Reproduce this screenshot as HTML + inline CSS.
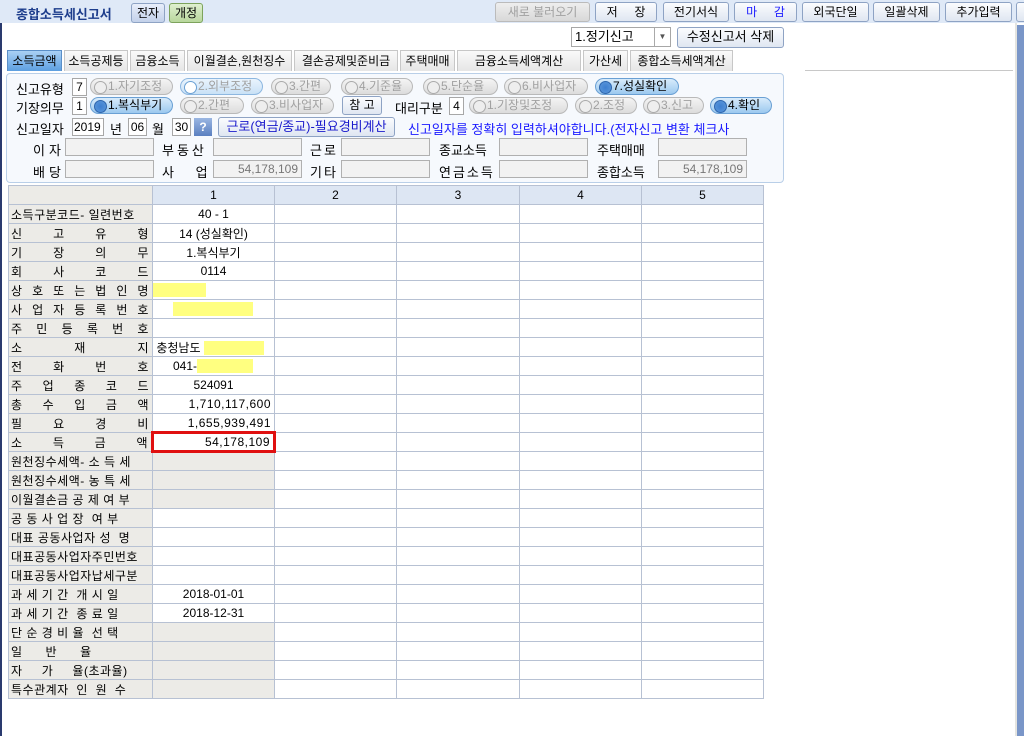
<!DOCTYPE html>
<html><head><meta charset="utf-8">
<style>
*{box-sizing:border-box;margin:0;padding:0}
body{width:1024px;height:736px;background:#fff;position:relative;overflow:hidden;font-family:"Liberation Sans","Noto Sans CJK KR","NanumGothic",sans-serif;font-size:12px;color:#000}
.a{position:absolute;white-space:nowrap}
.btn{position:absolute;height:20px;border:1px solid #8ea3c4;border-radius:3px;background:linear-gradient(#fbfcfe,#dfe6f1);text-align:center;line-height:18px;font-size:12px}
.tab{position:absolute;top:50px;height:21px;border:1px solid #c7c7c7;border-bottom:none;background:linear-gradient(#fafafa,#e6e6e6);text-align:center;line-height:20px;font-size:12px}
.pill{position:absolute;height:17px;border:1px solid #b9b9b9;border-radius:9px;background:linear-gradient(#f4f4f4,#dcdcdc);color:#a0a0a0;line-height:15px;font-size:12px;padding-left:17px}
.pill:before{content:"";position:absolute;left:3px;top:2px;width:11px;height:11px;border-radius:50%;border:1px solid #aaa;background:#eee}
.pill.on{background:linear-gradient(#d8ebfb,#9cc9ef);border-color:#6aa0d4;color:#000}
.pill.on:before{background:radial-gradient(#3d7fd0,#5c98db);border-color:#2d65ad}
.pill.half{background:linear-gradient(#eaf4fd,#c9e1f6);border-color:#8db7e0;color:#a0a0a0}
.pill.half:before{background:#fff;border-color:#6aa0d4}
.box{position:absolute;height:18px;border:1px solid #a7a7a7;background:#fff;font-size:12px;line-height:16px}
.inp{position:absolute;height:18px;border:1px solid #b0b0b0;background:#f2f2f2;font-size:12px;line-height:16px;text-align:right;padding-right:3px;color:#777}
.lbl{position:absolute;font-size:13px;letter-spacing:0}
table{position:absolute;left:8px;top:185px;border-collapse:collapse;table-layout:fixed}
td{border:1px solid #b7c1d3;height:19px;font-size:12px;padding:0;white-space:nowrap;overflow:hidden}
td.l{background:#ecebe7;padding-left:2px;letter-spacing:0.5px}
td.g{background:#ecebe7}
td.h{background:#dde6f3;text-align:center}
td.c{text-align:center}
td.r{text-align:right;padding-right:3px;letter-spacing:0.5px}
.j{display:flex;justify-content:space-between;padding-right:3px}
.y{background:#ffff80;display:inline-block;height:14px;vertical-align:middle}
</style></head><body>
<div class="a" style="left:0;top:0;width:1024px;height:23px;background:#dfe9f7"></div>
<div class="a" style="left:0;top:23px;width:2px;height:713px;background:#2a3a6e"></div>
<div class="a" style="left:1015px;top:23px;width:2px;height:713px;background:#e4e4e0"></div>
<div class="a" style="left:1017px;top:25px;width:7px;height:711px;background:#7a96c8"></div>
<div class="a" style="left:16px;top:4px;font-weight:bold;color:#1d3d8c;font-size:13px">종합소득세신고서</div>
<div class="btn" style="left:131px;top:3px;width:34px;background:linear-gradient(#e8eefa,#c3d1ea)">전자</div>
<div class="btn" style="left:169px;top:3px;width:34px;background:linear-gradient(#dff0cf,#b8d79c);border-color:#7da35c">개정</div>
<div class="btn" style="left:495px;top:2px;width:95px;color:#a0a0a0;background:linear-gradient(#eee,#d8d8d8);border-color:#bbb">새로 불러오기</div>
<div class="btn" style="left:595px;top:2px;width:62px">저 &nbsp; &nbsp; 장</div>
<div class="btn" style="left:663px;top:2px;width:66px">전기서식</div>
<div class="btn" style="left:734px;top:2px;width:63px;color:#1a1aff">마 &nbsp; &nbsp; 감</div>
<div class="btn" style="left:802px;top:2px;width:67px">외국단일</div>
<div class="btn" style="left:873px;top:2px;width:67px">일괄삭제</div>
<div class="btn" style="left:945px;top:2px;width:67px">추가입력</div>
<div class="btn" style="left:1016px;top:2px;width:20px"></div>

<div class="box" style="left:571px;top:27px;width:100px;height:20px;padding-left:3px;line-height:18px;font-size:13px">1.정기신고</div>
<div class="a" style="left:654px;top:28px;width:16px;height:18px;border-left:1px solid #aaa;text-align:center;font-size:8px;line-height:18px;color:#555">▼</div>
<div class="btn" style="left:677px;top:27px;width:107px;height:21px;font-size:13px">수정신고서 삭제</div>
<div class="a" style="left:805px;top:70px;width:208px;height:1px;background:#c8c8c8"></div>

<div class="tab" style="left:7px;width:55px;background:linear-gradient(#a9d0f5,#5d9fe0);border-color:#5b8fc8">소득금액</div>
<div class="tab" style="left:64px;width:64px">소득공제등</div>
<div class="tab" style="left:130px;width:55px">금융소득</div>
<div class="tab" style="left:187px;width:105px">이월결손,원천징수</div>
<div class="tab" style="left:294px;width:104px">결손공제및준비금</div>
<div class="tab" style="left:400px;width:55px">주택매매</div>
<div class="tab" style="left:457px;width:124px">금융소득세액계산</div>
<div class="tab" style="left:583px;width:45px">가산세</div>
<div class="tab" style="left:630px;width:103px">종합소득세액계산</div>

<div class="a" style="left:6px;top:73px;width:778px;height:110px;border:1px solid #b9cfe8;border-radius:4px;background:#f6f9fd"></div>
<div class="lbl" style="left:16px;top:79px">신고유형</div>
<div class="box" style="left:72px;top:78px;width:15px;text-align:center">7</div>
<div class="pill" style="left:90px;top:78px;width:83px">1.자기조정</div>
<div class="pill half" style="left:180px;top:78px;width:83px">2.외부조정</div>
<div class="pill" style="left:271px;top:78px;width:60px">3.간편</div>
<div class="pill" style="left:341px;top:78px;width:72px">4.기준율</div>
<div class="pill" style="left:423px;top:78px;width:75px">5.단순율</div>
<div class="pill" style="left:504px;top:78px;width:84px">6.비사업자</div>
<div class="pill on" style="left:595px;top:78px;width:84px">7.성실확인</div>

<div class="lbl" style="left:16px;top:98px">기장의무</div>
<div class="box" style="left:72px;top:97px;width:15px;text-align:center">1</div>
<div class="pill on" style="left:90px;top:97px;width:83px">1.복식부기</div>
<div class="pill" style="left:180px;top:97px;width:64px">2.간편</div>
<div class="pill" style="left:251px;top:97px;width:83px">3.비사업자</div>
<div class="btn" style="left:342px;top:96px;width:40px;height:19px;line-height:17px">참 고</div>
<div class="lbl" style="left:395px;top:98px">대리구분</div>
<div class="box" style="left:449px;top:97px;width:15px;text-align:center">4</div>
<div class="pill" style="left:469px;top:97px;width:99px">1.기장및조정</div>
<div class="pill" style="left:575px;top:97px;width:62px">2.조정</div>
<div class="pill" style="left:643px;top:97px;width:61px">3.신고</div>
<div class="pill on" style="left:710px;top:97px;width:62px">4.확인</div>

<div class="lbl" style="left:16px;top:119px">신고일자</div>
<div class="box" style="left:72px;top:118px;width:32px;padding-left:1px">2019</div>
<div class="a" style="left:110px;top:119px;font-size:13px">년</div>
<div class="box" style="left:128px;top:118px;width:19px;text-align:center">06</div>
<div class="a" style="left:152px;top:119px;font-size:13px">월</div>
<div class="box" style="left:172px;top:118px;width:19px;text-align:center">30</div>
<div class="a" style="left:194px;top:118px;width:18px;height:18px;background:linear-gradient(#9ab6e2,#5a7fc0);color:#fff;font-weight:bold;text-align:center;line-height:18px">?</div>
<div class="btn" style="left:218px;top:117px;width:177px;color:#1a1acc;font-size:13px">근로(연금/종교)-필요경비계산</div>
<div class="a" style="left:408px;top:119px;color:#1a1aff;font-size:13px">신고일자를 정확히 입력하셔야합니다.(전자신고 변환 체크사</div>

<div class="lbl" style="left:33px;top:140px;letter-spacing:4px">이자</div>
<div class="inp" style="left:65px;top:138px;width:89px"></div>
<div class="lbl" style="left:162px;top:140px;letter-spacing:3px">부동산</div>
<div class="inp" style="left:213px;top:138px;width:89px"></div>
<div class="lbl" style="left:310px;top:140px;letter-spacing:2px">근로</div>
<div class="inp" style="left:341px;top:138px;width:89px"></div>
<div class="lbl" style="left:439px;top:140px">종교소득</div>
<div class="inp" style="left:499px;top:138px;width:89px"></div>
<div class="lbl" style="left:597px;top:140px">주택매매</div>
<div class="inp" style="left:658px;top:138px;width:89px"></div>

<div class="lbl" style="left:33px;top:162px;letter-spacing:4px">배당</div>
<div class="inp" style="left:65px;top:160px;width:89px"></div>
<div class="lbl" style="left:162px;top:162px">사 &nbsp; &nbsp; &nbsp;업</div>
<div class="inp" style="left:213px;top:160px;width:89px">54,178,109</div>
<div class="lbl" style="left:310px;top:162px;letter-spacing:2px">기타</div>
<div class="inp" style="left:341px;top:160px;width:89px"></div>
<div class="lbl" style="left:439px;top:162px;letter-spacing:2px">연금소득</div>
<div class="inp" style="left:499px;top:160px;width:89px"></div>
<div class="lbl" style="left:597px;top:162px">종합소득</div>
<div class="inp" style="left:658px;top:160px;width:89px">54,178,109</div>

<table>
<colgroup><col style="width:144px"><col style="width:122px"><col style="width:122px"><col style="width:123px"><col style="width:122px"><col style="width:122px"></colgroup>
<tr><td class="g"></td><td class="h">1</td><td class="h">2</td><td class="h">3</td><td class="h">4</td><td class="h">5</td></tr>
<tr><td class="l">소득구분코드- 일련번호</td><td class="c">40 - 1</td><td></td><td></td><td></td><td></td></tr>
<tr><td class="l"><div class="j"><span>신</span><span>고</span><span>유</span><span>형</span></div></td><td class="c">14 (성실확인)</td><td></td><td></td><td></td><td></td></tr>
<tr><td class="l"><div class="j"><span>기</span><span>장</span><span>의</span><span>무</span></div></td><td class="c">1.복식부기</td><td></td><td></td><td></td><td></td></tr>
<tr><td class="l"><div class="j"><span>회</span><span>사</span><span>코</span><span>드</span></div></td><td class="c">0114</td><td></td><td></td><td></td><td></td></tr>
<tr><td class="l"><div class="j"><span>상</span><span>호</span><span>또</span><span>는</span><span>법</span><span>인</span><span>명</span></div></td><td><span class="y" style="width:53px"></span></td><td></td><td></td><td></td><td></td></tr>
<tr><td class="l"><div class="j"><span>사</span><span>업</span><span>자</span><span>등</span><span>록</span><span>번</span><span>호</span></div></td><td><span class="y" style="width:80px;margin-left:20px"></span></td><td></td><td></td><td></td><td></td></tr>
<tr><td class="l"><div class="j"><span>주</span><span>민</span><span>등</span><span>록</span><span>번</span><span>호</span></div></td><td></td><td></td><td></td><td></td><td></td></tr>
<tr><td class="l"><div class="j"><span>소</span><span>재</span><span>지</span></div></td><td>&nbsp;충청남도 <span class="y" style="width:60px"></span></td><td></td><td></td><td></td><td></td></tr>
<tr><td class="l"><div class="j"><span>전</span><span>화</span><span>번</span><span>호</span></div></td><td>&nbsp; &nbsp; &nbsp; 041-<span class="y" style="width:56px"></span></td><td></td><td></td><td></td><td></td></tr>
<tr><td class="l"><div class="j"><span>주</span><span>업</span><span>종</span><span>코</span><span>드</span></div></td><td class="c">524091</td><td></td><td></td><td></td><td></td></tr>
<tr><td class="l"><div class="j"><span>총</span><span>수</span><span>입</span><span>금</span><span>액</span></div></td><td class="r">1,710,117,600</td><td></td><td></td><td></td><td></td></tr>
<tr><td class="l"><div class="j"><span>필</span><span>요</span><span>경</span><span>비</span></div></td><td class="r">1,655,939,491</td><td></td><td></td><td></td><td></td></tr>
<tr><td class="l"><div class="j"><span>소</span><span>득</span><span>금</span><span>액</span></div></td><td class="r" style="border:3px solid #e01010">54,178,109</td><td></td><td></td><td></td><td></td></tr>
<tr><td class="l">원천징수세액- 소 득 세</td><td class="g"></td><td></td><td></td><td></td><td></td></tr>
<tr><td class="l">원천징수세액- 농 특 세</td><td class="g"></td><td></td><td></td><td></td><td></td></tr>
<tr><td class="l">이월결손금 공 제 여 부</td><td class="g"></td><td></td><td></td><td></td><td></td></tr>
<tr><td class="l">공 동 사 업 장 &nbsp;여 부</td><td></td><td></td><td></td><td></td><td></td></tr>
<tr><td class="l">대표 공동사업자 성 &nbsp;명</td><td></td><td></td><td></td><td></td><td></td></tr>
<tr><td class="l">대표공동사업자주민번호</td><td></td><td></td><td></td><td></td><td></td></tr>
<tr><td class="l">대표공동사업자납세구분</td><td></td><td></td><td></td><td></td><td></td></tr>
<tr><td class="l">과 세 기 간 &nbsp;개 시 일</td><td class="c">2018-01-01</td><td></td><td></td><td></td><td></td></tr>
<tr><td class="l">과 세 기 간 &nbsp;종 료 일</td><td class="c">2018-12-31</td><td></td><td></td><td></td><td></td></tr>
<tr><td class="l">단 순 경 비 율 &nbsp;선 택</td><td class="g"></td><td></td><td></td><td></td><td></td></tr>
<tr><td class="l">일 &nbsp; &nbsp; &nbsp;반 &nbsp; &nbsp; &nbsp;율</td><td class="g"></td><td></td><td></td><td></td><td></td></tr>
<tr><td class="l">자 &nbsp; &nbsp; 가 &nbsp; &nbsp; 율(초과율)</td><td class="g"></td><td></td><td></td><td></td><td></td></tr>
<tr><td class="l">특수관계자 &nbsp;인 &nbsp;원 &nbsp;수</td><td class="g"></td><td></td><td></td><td></td><td></td></tr>
</table>
</body></html>
